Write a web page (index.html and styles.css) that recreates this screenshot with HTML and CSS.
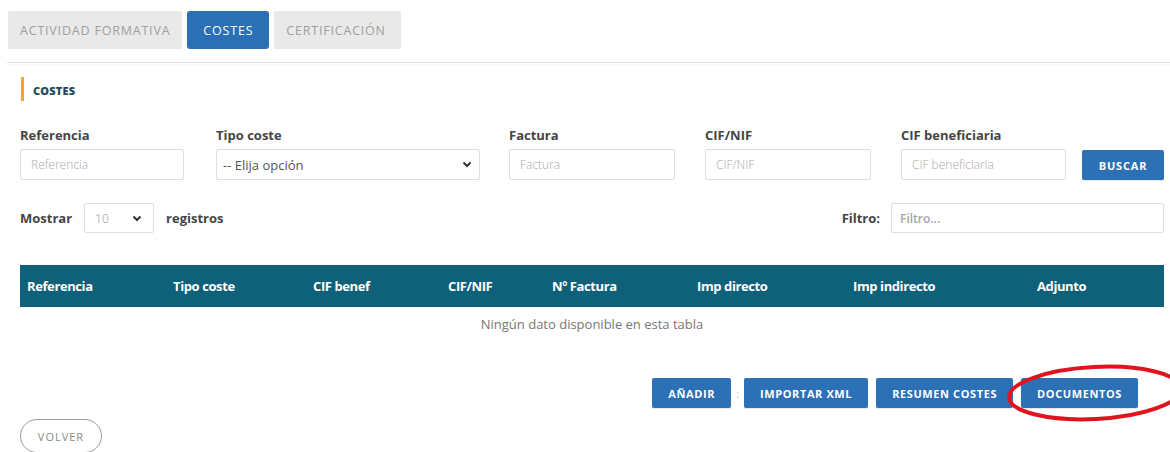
FILE: index.html
```html
<!DOCTYPE html>
<html lang="es">
<head>
<meta charset="utf-8">
<title>Costes</title>
<link rel="stylesheet" href="styles.css">
</head>
<body>
  <nav class="tabs">
    <a class="tab">ACTIVIDAD FORMATIVA</a>
    <a class="tab tab-active">COSTES</a>
    <a class="tab">CERTIFICACIÓN</a>
  </nav>
  <div class="rule"></div>

  <main class="panel">
    <h2 class="section-title">COSTES</h2>

    <form class="filters">
      <div class="field f-ref">
        <label>Referencia</label>
        <input type="text" placeholder="Referencia">
      </div>
      <div class="field f-tipo">
        <label>Tipo coste</label>
        <div class="select-wrap">
          <select class="select"><option>-- Elija opción</option></select>
          <svg class="chev" width="10" height="7" viewBox="0 0 10 7"><path d="M1.5 1.5 L5 5 L8.5 1.5" fill="none" stroke="#333" stroke-width="2"/></svg>
        </div>
      </div>
      <div class="field">
        <label>Factura</label>
        <input type="text" placeholder="Factura">
      </div>
      <div class="field">
        <label>CIF/NIF</label>
        <input type="text" placeholder="CIF/NIF">
      </div>
      <div class="field f-benef">
        <label>CIF beneficiaria</label>
        <input type="text" placeholder="CIF beneficiaria">
      </div>
      <div class="field f-btn">
        <button type="button" class="btn">BUSCAR</button>
      </div>
    </form>

    <div class="table-tools">
      <div class="length">
        <span class="lbl">Mostrar</span>
        <div class="select-wrap small">
          <select class="select"><option>10</option></select>
          <svg class="chev" width="10" height="7" viewBox="0 0 10 7"><path d="M1.5 1.5 L5 5 L8.5 1.5" fill="none" stroke="#333" stroke-width="2"/></svg>
        </div>
        <span class="lbl">registros</span>
      </div>
      <div class="search">
        <span class="lbl">Filtro:</span>
        <input type="text" class="filter-input" placeholder="Filtro...">
      </div>
    </div>

    <table class="grid">
      <colgroup>
        <col style="width:146px"><col style="width:140px"><col style="width:135px"><col style="width:104px">
        <col style="width:145px"><col style="width:156px"><col style="width:184px"><col style="width:134px">
      </colgroup>
      <thead>
        <tr>
          <th>Referencia</th><th>Tipo coste</th><th>CIF benef</th><th>CIF/NIF</th>
          <th>Nº Factura</th><th>Imp directo</th><th>Imp indirecto</th><th>Adjunto</th>
        </tr>
      </thead>
      <tbody>
        <tr><td colspan="8" class="empty">Ningún dato disponible en esta tabla</td></tr>
      </tbody>
    </table>

    <div class="actions">
      <button type="button" class="btn">AÑADIR</button>
      <span class="sep">:</span>
      <button type="button" class="btn">IMPORTAR XML</button>
      <button type="button" class="btn">RESUMEN COSTES</button>
      <span class="mark-wrap">
        <button type="button" class="btn">DOCUMENTOS</button>
        <svg class="mark" width="186" height="64" viewBox="0 0 186 64">
          <ellipse cx="92" cy="31" rx="86" ry="26" transform="rotate(-3 92 31)" fill="none" stroke="#e0141e" stroke-width="4"/>
        </svg>
      </span>
    </div>

    <button type="button" class="btn-back">VOLVER</button>
  </main>
</body>
</html>
```

FILE: styles.css
```css
* { box-sizing: border-box; }

html, body {
  margin: 0;
  padding: 0;
  background: #fff;
  overflow: hidden;
}

body {
  font-family: "Open Sans", "Liberation Sans", sans-serif;
  color: #444;
  width: 1170px;
  height: 452px;
}

/* top tabs */
.tabs {
  display: flex;
  gap: 5px;
  margin: 11px 0 0 8px;
}

.tab {
  display: flex;
  align-items: center;
  height: 38px;
  padding: 0 12px;
  background: #e9e9e9;
  color: #a0a0a0;
  font-size: 12.5px;
  font-weight: 400;
  letter-spacing: 0.8px;
  border-radius: 2px 2px 0 0;
}

.tab:last-child { padding-right: 15px; }

.tab-active {
  background: #2b6fb5;
  color: #fff;
  padding: 0 16px;
  border-radius: 3px;
}

.rule {
  margin: 13px 0 0 7px;
  height: 2px;
  border-top: 1px solid #e2e2e2;
  box-shadow: 0 1px 2px rgba(0, 0, 0, 0.05);
}

/* content */
.panel {
  padding: 0 6px 0 20px;
  position: relative;
}

.section-title {
  margin: 13px 0 0 1px;
  padding-left: 9px;
  height: 24px;
  display: flex;
  align-items: center;
  padding-top: 3px;
  border-left: 3px solid #f1a33a;
  font-size: 11px;
  font-weight: 800;
  color: #1f4a59;
  letter-spacing: 0.2px;
}

/* filter form */
.filters {
  display: grid;
  grid-template-columns: 196px 293px 196px 196px 181px 82px;
  margin-top: 27px;
}

.field {
  display: flex;
  flex-direction: column;
  padding-right: 30px;
}

.f-ref { padding-right: 32px; }
.f-tipo { padding-right: 29px; }
.f-benef { padding-right: 16px; }
.f-btn { padding-right: 0; justify-content: flex-end; }

.field label {
  font-size: 13px;
  font-weight: 700;
  color: #454545;
  line-height: 14px;
  margin-bottom: 7px;
}

input,
.select {
  font-family: inherit;
  height: 31px;
  border: 1px solid #dedede;
  border-radius: 2px;
  background: #fff;
  font-size: 12px;
  color: #555;
  padding: 0 10px;
  outline: none;
  width: 100%;
}

input::placeholder {
  color: #a9a9a9;
  font-weight: 300;
}

.select-wrap {
  position: relative;
}

.select {
  appearance: none;
  -webkit-appearance: none;
  padding: 0 6px;
  font-size: 13px;
  color: #555;
}

.chev {
  position: absolute;
  right: 8px;
  top: 12px;
  pointer-events: none;
}

.btn {
  font-family: inherit;
  height: 30px;
  border: none;
  border-radius: 2px;
  background: #2c70b6;
  color: #fff;
  font-size: 11px;
  font-weight: 700;
  letter-spacing: 0.8px;
  padding: 0 16px;
  cursor: pointer;
  box-shadow: 0 1px 1px rgba(0, 0, 0, 0.1);
}

.f-btn .btn {
  width: 82px;
  padding: 0;
}

/* length + search */
.table-tools {
  display: flex;
  justify-content: space-between;
  align-items: center;
  margin-top: 23px;
}

.length,
.search {
  display: flex;
  align-items: center;
}

.lbl {
  font-size: 13px;
  font-weight: 700;
  color: #454545;
}

.select-wrap.small {
  width: 70px;
  margin: 0 12px 0 12px;
}

.select-wrap.small .select {
  height: 30px;
  padding: 0 10px;
  font-size: 12px;
  font-weight: 300;
  color: #999;
}

.select-wrap.small .chev { right: 12px; }

.search .lbl { margin-right: 11px; }

.filter-input {
  width: 273px;
  height: 30px;
  padding: 0 8px;
}

.filter-input::placeholder {
  font-weight: 600;
  color: #a5a5a5;
}

/* table */
.grid {
  margin-top: 32px;
  width: 1144px;
  border-collapse: collapse;
  table-layout: fixed;
}

.grid th {
  background: #0f6079;
  color: #fff;
  height: 42px;
  text-align: left;
  padding: 0 7px;
  font-size: 13px;
  font-weight: 700;
  letter-spacing: -0.4px;
  white-space: nowrap;
}

.grid .empty {
  height: 34px;
  text-align: center;
  font-size: 13px;
  color: #777;
  padding-bottom: 1px;
}

/* action buttons */
.actions {
  display: flex;
  justify-content: flex-end;
  align-items: center;
  gap: 8px;
  margin-top: 37px;
  padding-right: 26px;
}

.actions .btn {
  padding: 0 16px;
  letter-spacing: 0.6px;
}

.sep {
  color: #bdbdbd;
  font-size: 11px;
  margin: 0 -3px;
}

.mark-wrap {
  position: relative;
  display: inline-flex;
}

.mark {
  position: absolute;
  left: -18px;
  top: -16px;
  pointer-events: none;
}

.btn-back {
  font-family: inherit;
  margin-top: 11px;
  width: 82px;
  height: 34px;
  border: 1px solid #9a9a9a;
  border-radius: 17px;
  background: #fff;
  color: #8a8a8a;
  font-size: 11px;
  letter-spacing: 1px;
}
```
